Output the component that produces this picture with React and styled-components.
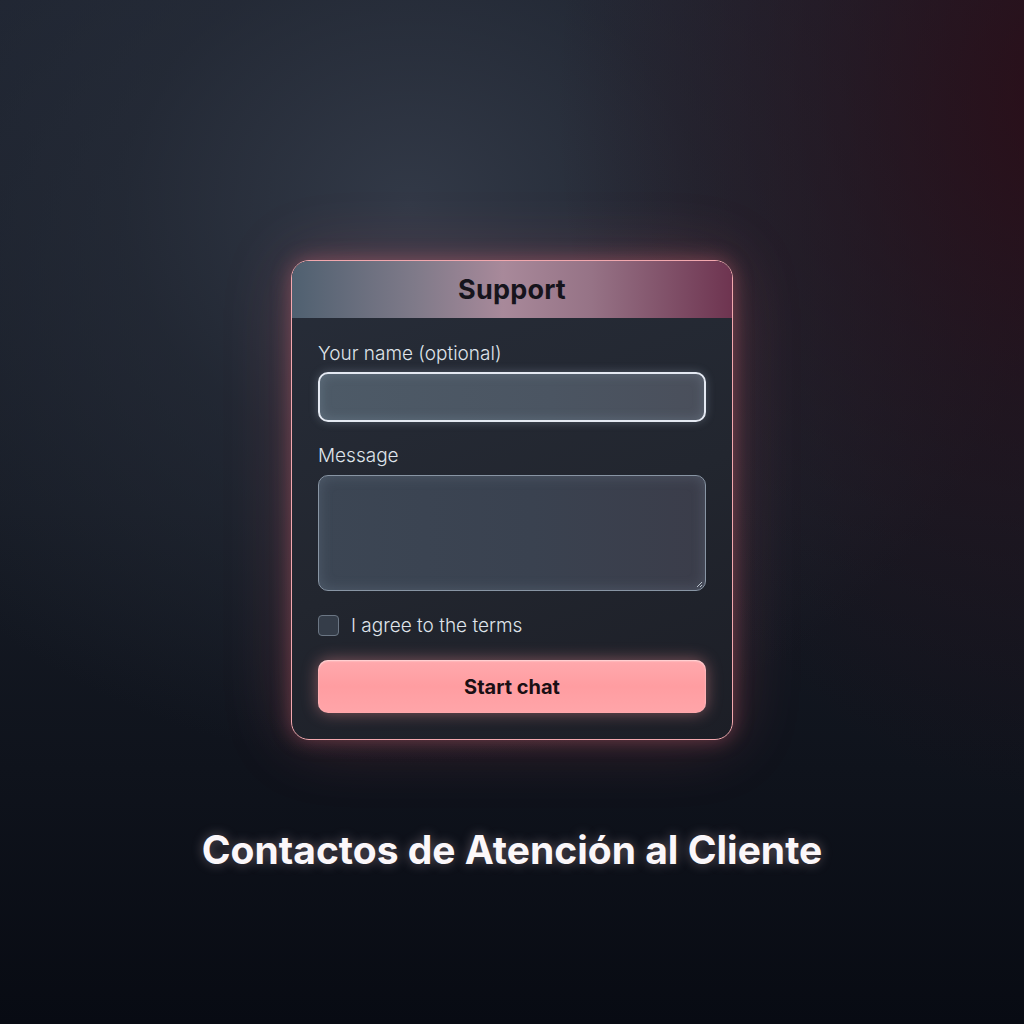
import React from "react";
import styled, { createGlobalStyle } from "styled-components";

const GlobalStyle = createGlobalStyle`
  html, body {
    margin: 0;
    padding: 0;
    background: #0b0f17;
  }
  * {
    box-sizing: border-box;
  }
`;

const Page = styled.div`
  width: 1024px;
  height: 1024px;
  display: flex;
  flex-direction: column;
  align-items: center;
  padding-top: 260px;
  font-family: "Inter", "Liberation Sans", sans-serif;
  background:
    radial-gradient(ellipse 520px 700px at 105% 10%, rgba(44, 12, 22, 0.9) 0%, rgba(40, 14, 24, 0.5) 45%, rgba(40, 14, 24, 0) 100%),
    radial-gradient(ellipse 640px 560px at 40% 20%, #323947 0%, rgba(40, 46, 58, 0.6) 45%, rgba(20, 24, 32, 0) 100%),
    linear-gradient(180deg, #1e2431 0%, #161b25 50%, #080b13 100%);
`;

const Card = styled.div`
  width: 442px;
  border: 1.5px solid #f2a8ae;
  border-radius: 18px;
  overflow: hidden;
  background: linear-gradient(160deg, #272d39 0%, #22262f 55%, #1c1e26 100%);
  box-shadow:
    0 0 20px rgba(255, 120, 135, 0.35),
    0 0 70px rgba(255, 110, 125, 0.2);
`;

const Header = styled.div`
  height: 57px;
  display: flex;
  align-items: center;
  justify-content: center;
  background: linear-gradient(90deg, #4f6070 0%, #7f7a89 28%, #a8899a 48%, #967386 68%, #6e3450 100%);
  font-size: 27px;
  font-weight: 700;
  color: #16141c;
  letter-spacing: 0.2px;
`;

const Body = styled.div`
  display: flex;
  flex-direction: column;
  padding: 25px 26px 26px;
`;

const Label = styled.label`
  font-size: 19px;
  font-weight: 300;
  color: #dfe3ea;
  line-height: 22px;
  margin-bottom: ${(p) => p.$gap || 7}px;
`;

const NameInput = styled.div`
  height: 50px;
  border-radius: 10px;
  border: 2px solid #e4e9f2;
  background: linear-gradient(90deg, #4d5a67 0%, #4b5562 60%, #4a4f5b 100%);
  box-shadow:
    0 0 10px rgba(200, 220, 240, 0.25),
    inset 0 0 12px rgba(160, 185, 205, 0.25);
  margin-bottom: 23px;
`;

const MessageBox = styled.div`
  position: relative;
  height: 116px;
  border-radius: 10px;
  border: 1.5px solid #8895a4;
  background: linear-gradient(90deg, #3c4654 0%, #3a4250 55%, #3b3d4a 100%);
  box-shadow: inset 0 0 14px rgba(140, 160, 180, 0.25);
  margin-bottom: 23px;
`;

const Grip = styled.svg`
  position: absolute;
  right: 2px;
  bottom: 2px;
`;

const CheckRow = styled.div`
  display: flex;
  align-items: center;
  gap: 12px;
  margin-bottom: 23px;
`;

const Box = styled.div`
  width: 21px;
  height: 21px;
  border-radius: 4px;
  border: 1.5px solid #6b7684;
  background: #353d49;
`;

const CheckText = styled.span`
  font-size: 19px;
  font-weight: 300;
  color: #dfe3ea;
`;

const Button = styled.button`
  height: 53px;
  border: none;
  border-radius: 10px;
  background: linear-gradient(180deg, #ffa9ad 0%, #ff9da1 50%, #ffa5a9 100%);
  box-shadow:
    0 0 16px rgba(255, 150, 155, 0.45),
    inset 0 1px 2px rgba(255, 235, 235, 0.8);
  font-family: "Inter", "Liberation Sans", sans-serif;
  font-size: 20px;
  font-weight: 700;
  color: #1a0f14;
  cursor: pointer;
`;

const Title = styled.h1`
  margin: 86px 0 0;
  font-size: 39px;
  font-weight: 700;
  color: #fbf7fa;
  letter-spacing: 0px;
  text-shadow: 0 0 12px rgba(255, 220, 230, 0.35);
`;

export default function App() {
  return (
    <Page>
      <GlobalStyle />
      <Card>
        <Header>Support</Header>
        <Body>
          <Label>Your name (optional)</Label>
          <NameInput />
          <Label $gap={8}>Message</Label>
          <MessageBox>
            <Grip width="8" height="8" viewBox="0 0 8 8">
              <path d="M7 2 L2 7 M7 5 L5 7" stroke="#b8c2cc" strokeWidth="1" />
            </Grip>
          </MessageBox>
          <CheckRow>
            <Box />
            <CheckText>I agree to the terms</CheckText>
          </CheckRow>
          <Button>Start chat</Button>
        </Body>
      </Card>
      <Title>Contactos de Atención al Cliente</Title>
    </Page>
  );
}
